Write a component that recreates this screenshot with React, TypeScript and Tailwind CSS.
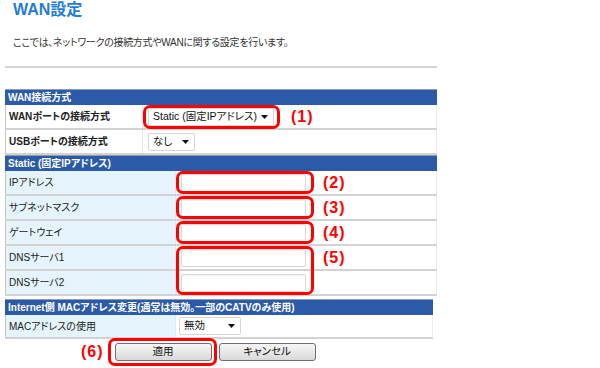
import type { ReactNode } from 'react';

const jp = "font-['Liberation_Sans','Noto_Sans_CJK_JP',sans-serif] [font-feature-settings:'palt']";

function Header({ children, width = 'w-[432px]' }: { children: ReactNode; width?: string }) {
  return (
    <div className={`${width} h-[16px] bg-[#2b5ba8] border-t border-[#8e9bb0] text-white font-bold text-[10px] leading-[15px] pl-[3px] whitespace-nowrap`}>
      {children}
    </div>
  );
}

function Row({
  label,
  labelClass,
  children,
  height = 'h-[25px]',
  width = 'w-[432px]',
}: {
  label: string;
  labelClass: string;
  children?: ReactNode;
  height?: string;
  width?: string;
}) {
  return (
    <div className={`flex ${width} ${height} border-b-2 border-[#d2d2d2]`}>
      <div className={`flex items-center pl-[3px] border-l border-[#c4c4c4] text-[10px] text-[#222] ${labelClass}`}>
        {label}
      </div>
      <div className="flex flex-1 items-center bg-white border-l border-[#e6e6e6] border-r border-r-[#eeeeee]">
        {children}
      </div>
    </div>
  );
}

function Arrow() {
  return (
    <svg width="7" height="4" viewBox="0 0 7 4" className="shrink-0">
      <path d="M0 0h7L3.5 4z" fill="#111" />
    </svg>
  );
}

function Select({ value, width }: { value: string; width: string }) {
  return (
    <div className={`${width} h-[18px] flex items-center justify-between pl-[4px] pr-[5px] bg-white border border-[#d6d6d6] rounded-[2px] text-[10.5px] text-[#111] whitespace-nowrap`}>
      <span>{value}</span>
      <Arrow />
    </div>
  );
}

function TextBox() {
  return <div className="w-[125px] h-[18px] bg-white border border-[#d9d9d9] rounded-[2px] shadow-[inset_0_1px_1px_rgba(0,0,0,0.06)]" />;
}

function Mark({ children, className = '' }: { children: ReactNode; className?: string }) {
  return <span className={`text-[#ff0000] font-bold text-[16px] leading-none tracking-[1px] ${className}`}>{children}</span>;
}

function Ring({ className }: { className: string }) {
  return <div className={`absolute border-[3px] border-[#ff0000] rounded-[7px] pointer-events-none ${className}`} />;
}

function Button({ children }: { children: ReactNode }) {
  return (
    <div className="w-[97px] h-[18px] flex items-center justify-center border border-[#6f6f6f] rounded-[3px] bg-gradient-to-b from-[#f7f7f7] to-[#d9d9d9] text-[10.5px] text-[#111]">
      {children}
    </div>
  );
}

export default function App() {
  const staticLabel = 'w-[170px] bg-[#e5f4fc] font-normal';
  const wanLabel = 'w-[137px] bg-white font-bold';

  return (
    <div className={`w-[600px] h-[368px] bg-white overflow-hidden ${jp}`}>
      <h1 className="ml-[13px] pt-[1px] text-[16px] leading-[18px] font-bold text-[#1f7dd6]">WAN設定</h1>
      <p className="ml-[13px] mt-[18px] text-[10px] leading-[12px] tracking-[-0.3px] text-[#333]">
        ここでは、ネットワークの接続方式やWANに関する設定を行います。
      </p>
      <div className="ml-[5px] mt-[17px] w-[432px] h-[2px] bg-[#d4d4d4]" />

      <div className="ml-[5px] mt-[21px]">
        <Header>WAN接続方式</Header>
        <Row label="WANポートの接続方式" labelClass={wanLabel}>
          <div className="relative ml-[5px]">
            <Select value="Static (固定IPアドレス)" width="w-[126px]" />
            <Ring className="-left-[5px] -right-[6px] -top-[3px] -bottom-[3px]" />
          </div>
          <Mark className="ml-[17px]">(1)</Mark>
        </Row>
        <Row label="USBポートの接続方式" labelClass={wanLabel}>
          <div className="ml-[5px]">
            <Select value="なし" width="w-[47px]" />
          </div>
        </Row>

        <Header>Static (固定IPアドレス)</Header>
        <Row label="IPアドレス" labelClass={staticLabel}>
          <div className="relative ml-[5px]">
            <TextBox />
            <Ring className="-left-[5px] -right-[8px] -top-[3px] -bottom-[2px]" />
          </div>
          <Mark className="ml-[17px]">(2)</Mark>
        </Row>
        <Row label="サブネットマスク" labelClass={staticLabel}>
          <div className="relative ml-[5px]">
            <TextBox />
            <Ring className="-left-[5px] -right-[8px] -top-[3px] -bottom-[2px]" />
          </div>
          <Mark className="ml-[17px]">(3)</Mark>
        </Row>
        <Row label="ゲートウェイ" labelClass={staticLabel}>
          <div className="relative ml-[5px]">
            <TextBox />
            <Ring className="-left-[5px] -right-[8px] -top-[3px] -bottom-[2px]" />
          </div>
          <Mark className="ml-[17px]">(4)</Mark>
        </Row>
        <Row label="DNSサーバ1" labelClass={staticLabel}>
          <div className="relative ml-[5px]">
            <TextBox />
            <Ring className="-left-[5px] -right-[8px] -top-[3px] -bottom-[28px] z-10" />
          </div>
          <Mark className="ml-[17px]">(5)</Mark>
        </Row>
        <Row label="DNSサーバ2" labelClass={staticLabel}>
          <div className="ml-[5px]">
            <TextBox />
          </div>
        </Row>

        <div className="mt-[3px]">
          <Header width="w-[428px]">Internet側 MACアドレス変更(通常は無効。一部のCATVのみ使用)</Header>
          <Row label="MACアドレスの使用" labelClass={staticLabel} height="h-[24px]" width="w-[428px]">
            <div className="ml-[3px]">
              <Select value="無効" width="w-[62px]" />
            </div>
          </Row>
        </div>
      </div>

      <div className="flex items-center mt-[4px] ml-[81px]">
        <Mark>(6)</Mark>
        <div className="relative ml-[11px]">
          <Button>適用</Button>
          <Ring className="-left-[7px] -right-[5px] -top-[5px] -bottom-[5px]" />
        </div>
        <div className="ml-[7px]">
          <Button>キャンセル</Button>
        </div>
      </div>
    </div>
  );
}
